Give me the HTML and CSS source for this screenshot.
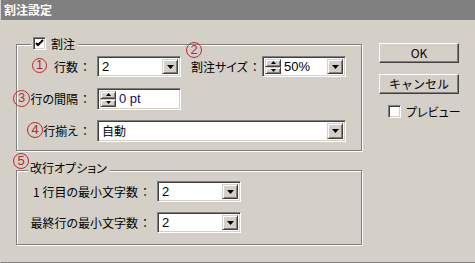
FILE: index.html
```html
<!DOCTYPE html>
<html lang="ja">
<head>
<meta charset="utf-8">
<title>割注設定</title>
<link rel="stylesheet" href="styles.css">
</head>
<body>
<div class="dialog">
  <div class="titlebar">割注設定</div>
  <div class="content">
    <div class="main">
      <div class="group g1">
        <div class="legend">
          <span class="checkbox"><svg width="9" height="9" viewBox="0 0 9 9"><path d="M1 4 L3 6 L8 1" fill="none" stroke="#000" stroke-width="2"/></svg></span>
          <span>割注</span>
        </div>
        <div class="rows rows1">
          <span class="lbl">行数<span class="colon">：</span></span>
          <div class="ctl">
            <div class="field w84"><span class="val">2</span><span class="drop"><svg width="7" height="4" viewBox="0 0 7 4"><path d="M0 0H7L3.5 4Z" fill="#000"/></svg></span></div>
            <span class="lbl2">割注サイズ<span class="colon">：</span></span>
            <div class="field w84">
              <span class="spin"><span class="sb"><svg width="5" height="3" viewBox="0 0 5 3"><path d="M0 3H5L2.5 0Z" fill="#000"/></svg></span><span class="sb"><svg width="5" height="3" viewBox="0 0 5 3"><path d="M0 0H5L2.5 3Z" fill="#000"/></svg></span></span>
              <span class="val">50%</span>
              <span class="drop"><svg width="7" height="4" viewBox="0 0 7 4"><path d="M0 0H7L3.5 4Z" fill="#000"/></svg></span>
            </div>
          </div>
          <span class="lbl">行の間隔<span class="colon">：</span></span>
          <div class="ctl">
            <div class="field w84 tall">
              <span class="spin"><span class="sb"><svg width="5" height="3" viewBox="0 0 5 3"><path d="M0 3H5L2.5 0Z" fill="#000"/></svg></span><span class="sb"><svg width="5" height="3" viewBox="0 0 5 3"><path d="M0 0H5L2.5 3Z" fill="#000"/></svg></span></span>
              <span class="val navy">0 pt</span>
            </div>
          </div>
          <span class="lbl">行揃え<span class="colon">：</span></span>
          <div class="ctl">
            <div class="field wide tall"><span class="val">自動</span><span class="drop"><svg width="7" height="4" viewBox="0 0 7 4"><path d="M0 0H7L3.5 4Z" fill="#000"/></svg></span></div>
          </div>
        </div>
      </div>
      <div class="group g2">
        <div class="legend legend2"><span>改行オプション</span></div>
        <div class="rows rows2">
          <span class="lbl">1 行目の最小文字数<span class="colon">：</span></span>
          <div class="ctl">
            <div class="field w84"><span class="val">2</span><span class="drop"><svg width="7" height="4" viewBox="0 0 7 4"><path d="M0 0H7L3.5 4Z" fill="#000"/></svg></span></div>
          </div>
          <span class="lbl">最終行の最小文字数<span class="colon">：</span></span>
          <div class="ctl">
            <div class="field w84"><span class="val">2</span><span class="drop"><svg width="7" height="4" viewBox="0 0 7 4"><path d="M0 0H7L3.5 4Z" fill="#000"/></svg></span></div>
          </div>
        </div>
      </div>
    </div>
    <div class="side">
      <button class="btn">OK</button>
      <button class="btn">キャンセル</button>
      <div class="preview"><span class="checkbox"></span><span>プレビュー</span></div>
    </div>
  </div>
  <span class="mark m1">1</span>
  <span class="mark m2">2</span>
  <span class="mark m3">3</span>
  <span class="mark m4">4</span>
  <span class="mark m5">5</span>
</div>
</body>
</html>
```
FILE: styles.css
```css
* { box-sizing: border-box; }
html, body { margin: 0; padding: 0; }
body {
  background: #d4d0c8;
  font-family: "Noto Sans CJK JP", "Noto Sans", sans-serif;
  font-size: 12px;
  color: #000;
  font-feature-settings: "palt";
}
.dialog {
  position: relative;
  width: 475px;
  height: 263px;
  border-left: 1px solid #d4d0c8;
  border-bottom: 1px solid #808080;
}
.titlebar {
  height: 20px;
  line-height: 20px;
  background: #808080;
  color: #fff;
  font-weight: bold;
  padding-left: 3px;
  font-size: 12px;
}
.content { display: flex; }
.main { width: 361px; padding-top: 24px; padding-left: 15px; }
.group {
  border: 1px solid #808080;
  box-shadow: inset 1px 1px 0 #fff, 1px 1px 0 #fff;
  width: 346px;
}
.g1 { height: 107px; }
.g2 { height: 75px; margin-top: 19px; }
.legend {
  display: flex;
  align-items: center;
  gap: 5px;
  width: fit-content;
  height: 13px;
  margin: -8px 0 0 14px;
  padding: 0 3px 0 2px;
  background: #d4d0c8;
  line-height: 13px;
}
.legend2 { height: 16px; margin: -11px 0 0 11px; padding: 0 3px 0 2px; line-height: 16px; }
.checkbox {
  display: inline-flex;
  align-items: center;
  justify-content: center;
  width: 13px;
  height: 13px;
  background: #fff;
  border: 1px solid;
  border-color: #808080 #fff #fff #808080;
  box-shadow: inset 1px 1px 0 #404040, inset -1px -1px 0 #d4d0c8;
  flex: none;
}
.rows { display: grid; align-items: center; }
.rows1 {
  grid-template-columns: 74px 1fr;
  column-gap: 6px;
  row-gap: 11px;
  grid-auto-rows: 21px;
  margin-top: 6px;
}
.rows2 {
  grid-template-columns: 134px 1fr;
  column-gap: 6px;
  row-gap: 10px;
  grid-auto-rows: 21px;
  margin-top: 5px;
}
.lbl { text-align: right; white-space: nowrap; }
.colon { font-feature-settings: normal; display: inline-block; width: 12px; text-align: center; margin-left: 1px; }
.ctl { display: flex; align-items: center; height: 21px; }
.lbl2 { width: 66px; margin-left: 10px; margin-right: 5px; white-space: nowrap; }
.field {
  display: flex;
  align-items: stretch;
  height: 21px;
  background: #fff;
  border: 1px solid;
  border-color: #808080 #fff #fff #808080;
  box-shadow: inset 1px 1px 0 #404040, inset -1px -1px 0 #d4d0c8;
  padding: 2px 2px 2px 2px;
}
.tall { height: 22px; }
.w84 { width: 84px; }
.wide { width: 249px; }
.val { flex: 1; display: flex; align-items: center; padding-left: 2px; font-family: "Liberation Sans", "Noto Sans CJK JP", sans-serif; font-size: 13px; }
.wide .val { font-family: "Noto Sans CJK JP", sans-serif; font-size: 12px; }
.navy { color: #101060; }
.drop, .sb {
  display: flex;
  align-items: center;
  justify-content: center;
  background: #d4d0c8;
  border: 1px solid;
  border-color: #d4d0c8 #404040 #404040 #d4d0c8;
  box-shadow: inset 1px 1px 0 #fff, inset -1px -1px 0 #808080;
}
.drop { width: 16px; flex: none; }
.spin { display: flex; flex-direction: column; width: 16px; flex: none; }
.sb { flex: 1; }
.spin + .val { padding-left: 3px; }
.side { padding-top: 23px; padding-left: 17px; display: flex; flex-direction: column; align-items: flex-start; }
.btn {
  width: 80px;
  height: 20px;
  margin: 0 0 11px 0;
  padding: 0;
  font-family: "Noto Sans CJK JP", "Noto Sans", sans-serif;
  font-size: 12px;
  color: #000;
  background: #d4d0c8;
  border: 1px solid;
  border-color: #fff #404040 #404040 #fff;
  box-shadow: inset -1px -1px 0 #808080;
  line-height: 16px;
}
.preview { display: flex; align-items: center; gap: 5px; margin-left: 9px; height: 13px; }
.mark {
  position: absolute;
  width: 16px;
  height: 16px;
  border: 1.5px solid #b82a2a;
  border-radius: 50%;
  color: #b82a2a;
  font-family: "Liberation Sans", sans-serif;
  font-size: 13px;
  line-height: 13px;
  text-align: center;
}
.m1 { left: 31px; top: 58px; width: 15px; height: 15px; line-height: 12px; }
.m2 { left: 185px; top: 42px; }
.m3 { left: 12px; top: 90px; width: 17px; height: 17px; line-height: 14px; }
.m4 { left: 26px; top: 122px; }
.m5 { left: 12px; top: 153px; }
```
